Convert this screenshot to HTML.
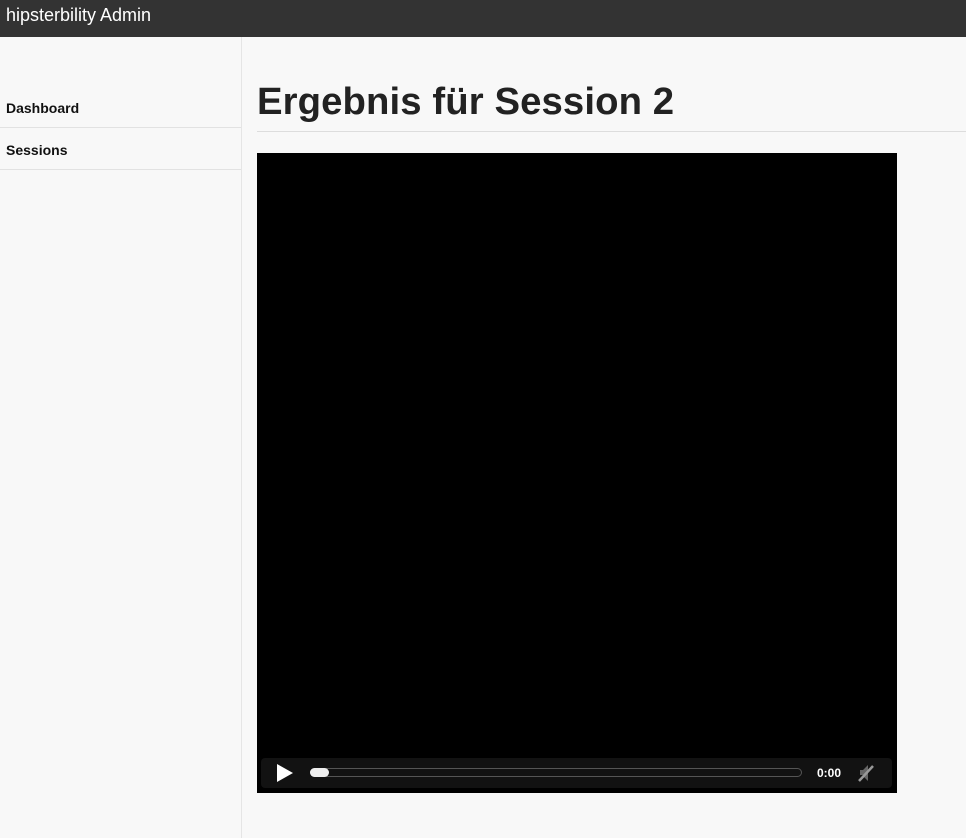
<!DOCTYPE html>
<html><head><meta charset="utf-8"><style>
*{margin:0;padding:0;box-sizing:border-box}
body{width:966px;height:838px;background:#f8f8f8;font-family:"Liberation Sans",Arial,sans-serif;position:relative;overflow:hidden}
.top{position:absolute;left:0;top:0;width:966px;height:37px;background:#333;color:#fff;font-size:18px;line-height:30px;padding-left:6px}
.side{position:absolute;left:0;top:37px;width:242px;height:801px;border-right:1px solid #e5e5e5}
.nav{position:absolute;left:0;width:241px;height:42px;border-bottom:1px solid #e2e2e2;font-weight:bold;font-size:14px;padding-left:6px;line-height:44px;color:#111}
h1{position:absolute;left:257px;top:80px;font-size:38.3px;font-weight:bold;color:#222;line-height:44px;letter-spacing:0.1px}
.rule{position:absolute;left:257px;top:131px;width:709px;height:1px;background:#ddd}
.vid{position:absolute;left:257px;top:153px;width:640px;height:640px;background:#000}
.ctl{position:absolute;left:4px;top:605px;width:631px;height:30px;background:#121212;border-radius:4px}
</style></head><body>
<div class="top">hipsterbility Admin</div>
<div class="side">
<div class="nav" style="top:49px">Dashboard</div>
<div class="nav" style="top:91px">Sessions</div>
</div>
<h1>Ergebnis für Session 2</h1>
<div class="rule"></div>
<div class="vid"><div class="ctl">
<svg style="position:absolute;left:16px;top:6px" width="16" height="18"><polygon points="0,0 16,9 0,18" fill="#fff"/></svg>
<div style="position:absolute;left:49px;top:10px;width:492px;height:9px;border:1px solid #555;border-radius:5px"></div>
<div style="position:absolute;left:49px;top:10px;width:19px;height:9px;background:#eee;border-radius:5px"></div>
<div style="position:absolute;left:556px;top:8px;color:#fff;font-size:12px;font-weight:bold">0:00</div>
<svg style="position:absolute;left:596px;top:5px" width="18" height="20"><path d="M3 12h3v-5h-3z M6 7l5-5v16l-5-5z" fill="#666"/><path d="M2 18L16 3" stroke="#999" stroke-width="2.5"/></svg>
</div></div>
</body></html>
